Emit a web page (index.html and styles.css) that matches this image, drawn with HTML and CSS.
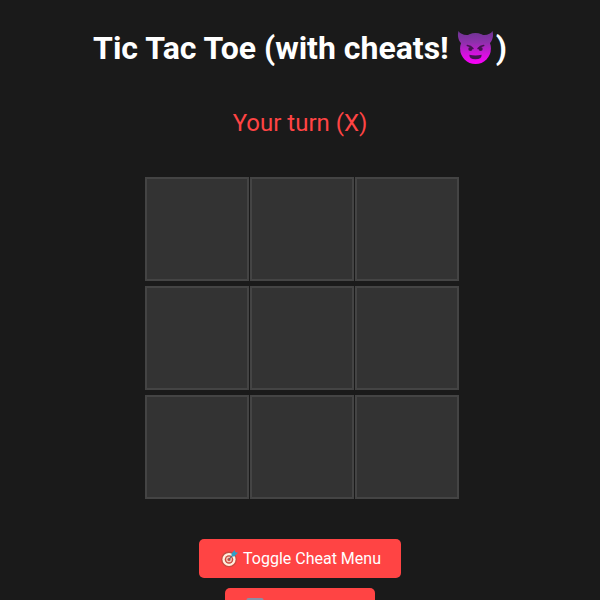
FILE: index.html
```
<!DOCTYPE html>
<html lang="en">
<head>
<meta charset="utf-8">
<meta name="viewport" content="width=device-width, initial-scale=1">
<title>Tic Tac Toe</title>
<link rel="stylesheet" href="styles.css">
</head>
<body>
<main class="game">
  <h1 class="title">Tic Tac Toe (with cheats!
    <svg class="devil" viewBox="0 0 36 36" role="img" aria-label="Smiling devil">
      <defs>
        <linearGradient id="skin" gradientUnits="userSpaceOnUse" x1="0" y1="2" x2="0" y2="34">
          <stop offset="0" stop-color="#6d3592"/>
          <stop offset=".35" stop-color="#8f30ac"/>
          <stop offset=".7" stop-color="#d312dd"/>
          <stop offset="1" stop-color="#fa00fa"/>
        </linearGradient>
      </defs>
      <g fill="url(#skin)">
        <circle cx="18" cy="19" r="15"/>
        <path d="M1.500 2C3 5 7.500 6.500 12.500 5.500L4.500 14.500C1.500 11.500 0 6.500 1.500 2Z"/>
        <path d="M34.500 2C33 5 28.500 6.500 23.500 5.500L31.500 14.500C34.500 11.500 36 6.500 34.500 2Z"/>
      </g>
      <path d="M10 16Q13.500 16.500 15.500 19M26 16Q22.500 16.500 20.500 19" fill="none" stroke="#43134f" stroke-width="1.500" stroke-linecap="round"/>
      <circle cx="13" cy="19.500" r="2" fill="#43134f"/>
      <circle cx="23" cy="19.500" r="2" fill="#43134f"/>
      <path fill="#43134f" d="M12 25Q18 26.500 24 25Q24 29.500 18 29.500Q12 29.500 12 25Z"/>
    </svg>)</h1>
  <p class="status" role="status">Your turn (X)</p>
  <div class="board">
    <button class="cell" type="button" aria-label="Row 1, column 1"></button>
    <button class="cell" type="button" aria-label="Row 1, column 2"></button>
    <button class="cell" type="button" aria-label="Row 1, column 3"></button>
    <button class="cell" type="button" aria-label="Row 2, column 1"></button>
    <button class="cell" type="button" aria-label="Row 2, column 2"></button>
    <button class="cell" type="button" aria-label="Row 2, column 3"></button>
    <button class="cell" type="button" aria-label="Row 3, column 1"></button>
    <button class="cell" type="button" aria-label="Row 3, column 2"></button>
    <button class="cell" type="button" aria-label="Row 3, column 3"></button>
  </div>
  <div class="controls">
    <button class="action" type="button">
      <svg class="icon" viewBox="0 0 20 20" aria-hidden="true">
        <circle cx="10" cy="11" r="8.300" fill="#c94a40"/>
        <circle cx="10" cy="11" r="6.900" fill="#fff0df"/>
        <circle cx="10" cy="11" r="4.500" fill="#c94a40"/>
        <circle cx="10" cy="11" r="3" fill="#f3c9bb"/>
        <circle cx="10" cy="11" r="1.600" fill="#c94a40"/>
        <path d="M10 11L15 5.500" stroke="#5c6670" stroke-width="1.200"/>
        <path d="M12.500 5L16 1L16.700 3.300L19.500 4L15.500 8L13 7.500Z" fill="#2f9fc6"/>
      </svg>
      Toggle Cheat Menu
    </button>
    <button class="action" type="button">
      <svg class="icon" viewBox="0 0 20 20" aria-hidden="true">
        <rect x="1" y="0" width="18" height="19" rx="2" fill="#8b8fa3"/>
        <path d="M5 9A5 5 0 0 1 14 7M15 11A5 5 0 0 1 6 13M14 4V7H11M6 16V13H9" fill="none" stroke="#fff" stroke-width="2"/>
      </svg>
      Reset Game
    </button>
  </div>
</main>
</body>
</html>
```
FILE: styles.css
```
html {
  background: #1a1a1a;
  scrollbar-width: none;
}

body {
  margin: 0;
  padding: 8px 20px;
  color: #fff;
  font-family: Roboto, "Liberation Sans", sans-serif;
}

.game {
  display: flex;
  flex-direction: column;
  align-items: center;
}

.title {
  margin: 20px 0;
  font-size: 32px;
  line-height: 40px;
}

.devil {
  width: 37px;
  height: 37px;
  margin-right: 2px;
  vertical-align: -7px;
}

.status {
  margin: 20px 0 19px;
  color: #ff4444;
  font-size: 24px;
  line-height: 30px;
}

.board {
  display: grid;
  grid-template-columns: repeat(3, 100px);
  gap: 5px;
  margin: 20px 0 40px;
}

.cell {
  box-sizing: content-box;
  width: 100px;
  height: 100px;
  padding: 0;
  border: 2px solid #444;
  background: #333;
}

.controls {
  display: flex;
  flex-direction: column;
  align-items: center;
  gap: 10px;
}

.action {
  display: flex;
  align-items: center;
  gap: 4px;
  padding: 10px 20px;
  border: 0;
  border-radius: 5px;
  background: #ff4444;
  color: #fff;
  font: 16px/19px Roboto, "Liberation Sans", sans-serif;
}

.icon {
  width: 20px;
  height: 19px;
}
```
